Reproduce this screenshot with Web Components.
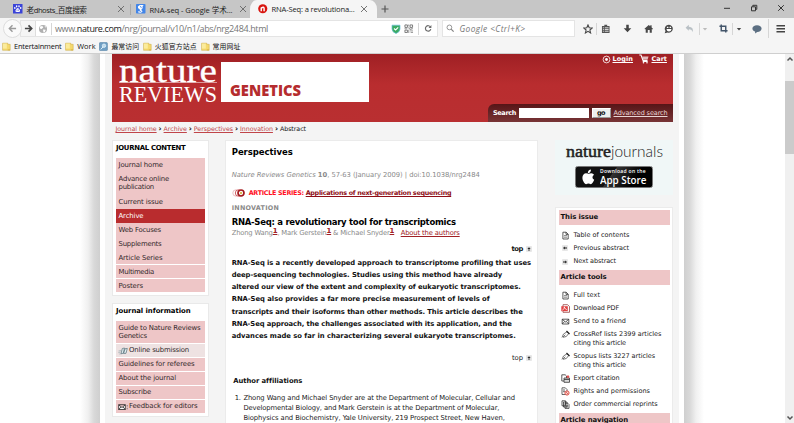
<!DOCTYPE html>
<html lang="en">
<head>
<meta charset="utf-8">
<title>RNA-Seq: a revolutionary tool for transcriptomics</title>
<style>
html,body{margin:0;height:100%;overflow:hidden;background:#fff}
</style>
</head>
<body>
<browser-window></browser-window>
<script>
const ICONS = {
  paw:['0 0 10 10','<rect width="10" height="10" fill="#3a43d8"/><path d="M5 4.3Q6.3 4.6 7.5 7 7.6 8.7 5 8.4 2.3 8.7 2.5 7 3.6 4.5 5 4.3Z" fill="#fff"/><ellipse cx="1.9" cy="4.2" rx=".8" ry="1.1" fill="#fff"/><ellipse cx="3.8" cy="2.4" rx=".8" ry="1.2" fill="#fff"/><ellipse cx="6.3" cy="2.4" rx=".8" ry="1.2" fill="#fff"/><ellipse cx="8.1" cy="4.2" rx=".8" ry="1.1" fill="#fff"/><path d="M4.3 5.8v1.6M5.8 5.8v1.4" stroke="#3a43d8" stroke-width=".6"/>'],
  scholar:['0 0 10 10','<rect width="10" height="10" rx=".8" fill="#4285e8"/><path d="M2 2.5 4 1h4.2L7 2.2v2.2L5.8 5.5v1L7 7.6 5.3 9.3H3L2 8.2 4.4 6.8 3.6 5.3 2.2 4.6Z" fill="#fff"/><path d="M4.2 2.3q1.7.3 1.3 2M3.5 8.2l2-.6" stroke="#4285e8" stroke-width=".8" fill="none"/>'],
  nrg:['0 0 10 10','<circle cx="5" cy="5" r="4.8" fill="#d8150f"/><path d="M3.4 7.5V3.7M3.4 4.4Q6.3 2.3 6.4 4.8V7.5" fill="none" stroke="#fff" stroke-width="1.5"/>'],
  x:['0 0 8 8','<path d="M1 1l6 6M7 1 1 7" stroke="#666" stroke-width=".9"/>'],
  wx:['0 0 8 8','<path d="M1.2 1.2l5.6 5.6M6.8 1.2 1.2 6.8" stroke="#333" stroke-width="1"/>'],
  min:['0 0 8 8','<path d="M1 4.3h6" stroke="#333" stroke-width="1"/>'],
  max:['0 0 8 8','<path d="M1.5 2.8h4v4h-4zM2.8 2.6V1.3h4v4H5.6" fill="none" stroke="#333"/>'],
  plus:['0 0 8 8','<path d="M.5 4h7M4 .5v7" stroke="#555" stroke-width="1.2"/>'],
  back:['0 0 10 10','<path d="M9 5H2M5 1.5 1.5 5 5 8.5" fill="none" stroke="#9b9b9b" stroke-width="1.6"/>'],
  fwd:['0 0 10 10','<path d="M1 5h7M5 1.5 8.5 5 5 8.5" fill="none" stroke="#444" stroke-width="1.9"/>'],
  globe:['0 0 10 10','<circle cx="5" cy="5" r="4" fill="#b0b0b0"/><path d="M2 2.5 4.3 2l1 1.5L3.5 5 2 4.5ZM5 5.5l2.7.2-.8 2.2L5.5 8.5ZM6.5 1.7l1.6 1-.6 1z" fill="#fff"/>'],
  shield:['0 0 10 10','<path d="M1 1.2h8V5Q8.8 8 5 9.6 1.2 8 1 5Z" fill="#3aab62" stroke="#6cbfd8" stroke-width=".7"/><path d="M3 4.5 4.6 6 7.2 3.3" fill="none" stroke="#fff" stroke-width="1.1"/>'],
  qr:['0 0 10 10','<path d="M1 1h2.6v2.6H1zM6.4 1H9v2.6H6.4zM1 6.4h2.6V9H1z" fill="none" stroke="#777"/><path d="M5 .5v2M4.5 4h1v1h1v1h1V5h2M.5 5h3M5 6v3.5M6.5 7.3h3M7 9h2.5" fill="none" stroke="#888" stroke-width=".9"/>'],
  reload:['0 0 10 10','<path d="M7.6 3.5A3.2 3.2 0 1 0 8 6" fill="none" stroke="#6b6b6b" stroke-width="1.4"/><path d="M8.7 1.2V4.6H5.3Z" fill="#6b6b6b"/>'],
  lens:['0 0 10 10','<circle cx="4" cy="4" r="2.8" fill="none" stroke="#858585"/><path d="M6 6l3 3" stroke="#858585" stroke-width="1.4"/>'],
  star:['0 0 10 10','<path d="M5 .9 6.2 3.7l3 .3L6.9 6 7.6 9 5 7.4 2.4 9 3.1 6 .8 4l3-.3Z" fill="none" stroke="#484848" stroke-width="1.1"/>'],
  clip:['0 0 10 10','<path d="M1 2h2.5V.8h3V2H9v7.4H1z" fill="#555"/><path d="M2 4h1M4 4h4M2 5.8h1M4 5.8h4M2 7.6h1M4 7.6h4" stroke="#fff" stroke-width=".8"/>'],
  down:['0 0 10 10','<path d="M3.6.8h2.8v4h2.8L5 9.3.8 4.8h2.8z" fill="#444"/>'],
  home:['0 0 10 10','<path d="M.5 5 5 1l1.6 1.4V1.2H8v2.5L9.5 5l-.7.7-.6-.5v4H6V6.3H4v2.9H1.8v-4l-.6.5z" fill="#484848"/>'],
  smile:['0 0 10 10','<path d="M5 .7a4.3 4 0 1 1-1.3 7.9L.7 9.2 1.5 7A4.2 4 0 0 1 5 .7Z" fill="#484848"/><path d="M2.4 5h5.2Q7 7.5 5 7.5 3 7.5 2.4 5ZM2.9 2.8h1.5v1.2H2.9zM5.6 2.8h1.5v1.2H5.6z" fill="#fff"/>'],
  undo:['0 0 10 10','<path d="M.6 4 4 .9v2Q9.5 3 8 8.8 7.5 5.5 4 5.4v1.8Z" fill="#b9c0c5"/>'],
  caret:['0 0 6 6','<path d="M.8 2h4.4L3 4.6z" fill="currentColor"/>'],
  crop:['0 0 10 10','<path d="M2.5.5v7h7M.5 2.5h7v7" fill="none" stroke="#43556a" stroke-width="1.6"/>'],
  bubble:['0 0 10 10','<path d="M5 1.2c2.7 0 4.6 1.5 4.6 3.4S7.8 8 5.3 8L3 9.6l.2-1.9C1.5 7.2.4 6 .4 4.6.4 2.7 2.3 1.2 5 1.2Z" fill="#5c6f82"/>'],
  menu:['0 0 10 10','<path d="M.5 1.8h9M.5 5h9M.5 8.2h9" stroke="#444" stroke-width="1.5"/>'],
  folder:['0 0 9 9','<path d="M.6 1.2h5.2v1.1h2.4v6H.6z" fill="#f5d96d" stroke="#c9a843" stroke-width=".5"/><path d="M1 1.6h3.8v5H1z" fill="#fbeb9c"/><path d="M5.8 7.9h2.2" stroke="#d2a93c" stroke-width=".8"/>'],
  smart:['0 0 9 9','<rect x=".4" y=".6" width="8" height="8" rx=".8" fill="#6f9fc4" stroke="#517fa5" stroke-width=".6"/><circle cx="5" cy="3.7" r="1.7" fill="#b9d9ec" stroke="#e6f4fc" stroke-width=".8"/><path d="M3.9 5 1.8 7.4" stroke="#e6f4fc"/>'],
  login:['0 0 9 9','<circle cx="4.5" cy="4.5" r="3.4" fill="none" stroke="#fff" stroke-width=".8"/><circle cx="4.5" cy="4.5" r="1.4" fill="#fff"/>'],
  cart:['0 0 10 10','<path d="M.3 1h1.7l2 5.4h4.5M3.7 7.5h5" fill="none" stroke="#fff" stroke-width="1.1"/><path d="M3 2.5h6.5L8.6 5.4H4Z" fill="#fff" opacity=".7"/><circle cx="4.5" cy="8.8" r=".8" fill="#fff"/><circle cx="8" cy="8.8" r=".8" fill="#fff"/>'],
  series:['0 0 13 8','<circle cx="4" cy="4" r="3.2" fill="#fff" stroke="#e4a5a7" stroke-width=".7"/><circle cx="6.5" cy="4" r="3.2" fill="#fff" stroke="#c94d51" stroke-width=".9"/><circle cx="9" cy="4" r="3" fill="#fff" stroke="#a3181c" stroke-width="1.7"/><circle cx="9" cy="4" r="1.2" fill="#d5bb55"/>'],
  up:['0 0 6 6','<rect x=".2" y=".2" width="5.6" height="5.6" fill="#e2e2e2"/><path d="M3 1.2 4.6 3H1.4zM2.6 3h.8v2h-.8z" fill="#222"/>'],
  left:['0 0 6 6','<rect x=".2" y=".2" width="5.6" height="5.6" fill="#e2e2e2"/><path d="M1 3 2.8 1.4v3.2zM2.8 2.6H5v.8H2.8z" fill="#222"/>'],
  right:['0 0 6 6','<rect x=".2" y=".2" width="5.6" height="5.6" fill="#e2e2e2"/><path d="M5 3 3.2 1.4v3.2zM1 2.6h2.2v.8H1z" fill="#222"/>'],
  doc:['0 0 9 9','<path d="M1.9 1.2h3.2L7.2 3.2V8H1.9zM5 1.2v2.2h2.2" fill="#fff" stroke="#333" stroke-width=".8"/><path d="M3 4.6h3M3 6.2h3" stroke="#555" stroke-width=".7"/>'],
  pdf:['0 0 9 9','<path d="M2 .7h4.6L8.5 2.6V8.3H2z" fill="#fff" stroke="#8a2a28" stroke-width=".7"/><path d="M.3 2.2h6.5v5H.3z" fill="#e04444"/><path d="M1.3 6.2Q4.5 4 3.3 2.8 2.3 3.7 5.8 5.7" fill="none" stroke="#fff" stroke-width=".8"/>'],
  mail:['0 0 9 9','<path d="M1.2 2.2h6.6v4.8H1.2zM1.2 2.3 4.5 5 7.8 2.3M1.2 7l2.5-2.5M7.8 7 5.3 4.5" fill="#fff" stroke="#333" stroke-width=".8"/>'],
  pen:['0 0 9 9','<path d="M1 7.5 2.5 4 6 1.8 7.7 3.5 5.3 6.5 2 7.3M2 7l2.3-2.3" fill="#fff" stroke="#555" stroke-width=".8"/><path d="M5.5 1 8.5 4" stroke="#222" stroke-width="1.3"/>'],
  exp:['0 0 9 9','<path d="M.8.8h3.4L5.5 2V7H.8z" fill="#fff" stroke="#333" stroke-width=".8"/><path d="M3 4h5.5v4.3H3zM3 5.5h5.5" fill="#ddd" stroke="#333" stroke-width=".8"/><path d="M5.5 2.8h2.8M7 1.2v3" stroke="#d33" stroke-width="1"/>'],
  rights:['0 0 9 9','<path d="M1 .8h3.3L6 2.5V7.5H1zM2 3h2M2 4.7h2" fill="#fff" stroke="#444" stroke-width=".8"/><circle cx="6" cy="6" r="2.1" fill="#fbd8d4" stroke="#dc5048"/><path d="M4.7 4.7l2.6 2.6" stroke="#dc5048" stroke-width=".8"/>'],
  copies:['0 0 9 9','<path d="M1 .8h3.5v5H1zM2.5 2h3.5v5H2.5zM4 3.2h2.7L8 4.5V8.4H4z" fill="#fff" stroke="#333" stroke-width=".8"/><path d="M5 5.7h2M5 7h2" stroke="#333" stroke-width=".6"/>'],
  submit:['0 0 10 8','<path d="M3 6.8 4.3 1.5 6.5 1 5.3 6.2zM5.6 6.5 7 1.8 9.3 1.4 8 6.3z" fill="#e3eef0" stroke="#55707a" stroke-width=".7"/><path d="M.3 5.7 2.6 5M.5 4l2.8-.5M1.3 7 3 6.8" stroke="#8ba2aa" stroke-width=".6"/>'],
  feedback:['0 0 10 8','<path d="M.7 1.7h6.6v4.8H.7zM.7 1.8 4 4.5 7.3 1.8M.7 6.5 3 4M7.3 6.5 5 4" fill="#fff" stroke="#222" stroke-width=".8"/><path d="M9.2 2v1.5M9.2 4.8v1.5" stroke="#666" stroke-width=".8"/>'],
  apple:['0 0 24 28','<path d="M16.5.5q.3 2.9-1.6 5-1.9 2-4.1 1.9-.3-2.8 1.6-4.8Q14.2.7 16.5.5ZM22.5 19.7q-1 3-2.9 5.5-1.7 2.5-3.4 2.5-1 0-2.2-.7-2.2-.9-4.4.1-1.2.6-2 .6-2 0-4-3Q.7 20.7.7 16.2q0-4 2.1-6.4Q4.8 7.5 7.5 7.5q1 0 2.8.7 1.5.6 2 .6.4 0 2.2-.7 1.7-.7 2.8-.7 3.2.2 4.9 2.7-2.9 1.8-2.9 4.9 0 3.3 3.2 4.7Z" fill="#fff"/>'],
  chevUp:['0 0 8 8','<path d="M1.5 5.5 4 3l2.5 2.5" fill="none" stroke="#555" stroke-width="1.5"/>'],
  chevDown:['0 0 8 8','<path d="M1.5 2.5 4 5l2.5-2.5" fill="none" stroke="#555" stroke-width="1.5"/>']
};
const make = (name, html) => customElements.define(name, class extends HTMLElement {
  connectedCallback(){
    if (this.shadowRoot) return;
    const root = this.attachShadow({mode:'open'});
    const t = document.createElement('template');
    t.innerHTML = typeof html === 'function' ? html(this) : html;
    root.append(t.content.cloneNode(true));
  }
});
const a = (el,n,d='') => el.getAttribute(n) ?? d;

make('ui-icon', el => {
  const [vb, body] = ICONS[a(el,'name')];
  return `<style>:host{display:block;flex:none;width:${a(el,'w','10')}px;height:${a(el,'h',a(el,'w','10'))}px}svg{display:block;width:100%;height:100%}</style><svg viewBox="${vb}">${body}</svg>`;
});

make('v-sep', `<style>:host{display:block;flex:none;width:1px;height:12px;background:#d6d6d6}</style>`);

make('browser-tab', el => `<style>
:host{display:flex;align-items:center;box-sizing:border-box;height:18px;flex:none;font-size:7.6px;color:#222}
:host([active]){background:#f5f5f5;border-radius:7px 7px 0 0/9px 9px 0 0}
fit-text{margin-left:4px}.c{margin-left:auto}
</style><ui-icon name="${a(el,'icon')}" w="9.5"></ui-icon><fit-text w="${a(el,'w')}"><slot></slot></fit-text><ui-icon class="c" name="x" w="8"></ui-icon>`);

make('tab-strip', `<style>
:host{display:flex;height:18px;background:#c6c6c6;align-items:center}
v-sep{background:#aaa;height:11px}
.ctl{display:flex;margin-left:auto;gap:19px;padding-right:9px;margin-top:-2px}
</style>
<browser-tab icon="paw" w="60" style="width:112px;margin-left:13px">老dhosts_百度搜索</browser-tab><v-sep style="margin-left:5px"></v-sep>
<browser-tab icon="scholar" w="83" style="width:111px;margin-left:5px">RNA-seq - Google 学术...</browser-tab>
<browser-tab active icon="nrg" w="83" style="width:127px;margin-left:3px;padding:0 9px 0 8px">RNA-Seq: a revolutiona...</browser-tab>
<ui-icon name="plus" w="8" style="margin-left:4px"></ui-icon>
<div class="ctl"><ui-icon name="min" w="8"></ui-icon><ui-icon name="max" w="8"></ui-icon><ui-icon name="wx" w="8"></ui-icon></div>`);

make('nav-bar', `<style>
:host{display:flex;align-items:center;height:21px;background:#f5f5f5;color:#777}
.back{display:grid;place-items:center;box-sizing:border-box;width:19px;height:19px;border:1px solid #ddd;border-radius:50%;background:#fafafa;margin-left:3px;flex:none;z-index:1}
.url,.find{display:flex;align-items:center;box-sizing:border-box;height:16.5px;background:#fff;border:1px solid #e4e4e4}
.url{width:418px;margin-left:-2px}.fwd{display:grid;place-items:center;width:15px;height:100%;background:#f5f5f5;border-right:1px solid #ddd;padding-left:1px;box-sizing:border-box}
.url fit-text{font-size:9px}.url b{font-weight:400;color:#222}
.find{width:133px;margin-left:4px}.find fit-text{font-size:8.4px;font-style:italic;margin-left:5px}
</style>
<div class="back"><ui-icon name="back" w="9"></ui-icon></div>
<div class="url"><div class="fwd"><ui-icon name="fwd" w="9"></ui-icon></div><ui-icon name="globe" w="10" style="margin-left:2px"></ui-icon><v-sep style="margin-left:3px"></v-sep><fit-text w="213" style="margin-left:3px">www.<b>nature.com</b>/nrg/journal/v10/n1/abs/nrg2484.html</fit-text>
<ui-icon name="shield" style="margin-left:auto"></ui-icon><ui-icon name="qr" w="9.5" style="margin-left:3px"></ui-icon><v-sep style="margin-left:4px"></v-sep><ui-icon name="reload" w="8.5" style="margin:0 5px 0 5px"></ui-icon></div>
<div class="find"><ui-icon name="lens" w="8.5" style="margin-left:3px"></ui-icon><fit-text w="66">Google &lt;Ctrl+K&gt;</fit-text></div>
<ui-icon name="star" style="margin-left:8px"></ui-icon><v-sep style="margin-left:3px"></v-sep><ui-icon name="clip" w="9.5" style="margin-left:4px"></ui-icon>
<ui-icon name="down" w="9" style="margin-left:12px"></ui-icon><ui-icon name="home" w="9.5" style="margin-left:12px"></ui-icon><ui-icon name="smile" style="margin-left:11px"></ui-icon>
<ui-icon name="undo" w="9.5" style="margin-left:11px"></ui-icon><v-sep style="margin-left:4px"></v-sep><ui-icon name="caret" w="6" style="margin-left:2px;color:#bbb"></ui-icon>
<ui-icon name="crop" w="9" style="margin-left:11px"></ui-icon><v-sep style="margin-left:4px"></v-sep><ui-icon name="caret" w="6" style="margin-left:3px;color:#444"></ui-icon>
<ui-icon name="bubble" style="margin-left:10px"></ui-icon><v-sep style="margin-left:6px;height:19px"></v-sep><ui-icon name="menu" w="9.5" style="margin-left:7px"></ui-icon>`);

make('book-mark', el => `<style>:host{display:flex;align-items:center;flex:none;gap:3px}:host([cjk]){font:6.9px "Noto Sans CJK SC",sans-serif}fit-text{line-height:12px}</style><ui-icon name="${a(el,'icon','folder')}" w="9"></ui-icon><fit-text w="${a(el,'w')}"><slot></slot></fit-text>`);
make('bookmark-bar', `<style>:host{display:flex;box-sizing:border-box;align-items:center;height:15px;background:#f5f5f5;border-bottom:1px solid #cfcfcf;padding-left:2px;gap:3.7px;font-size:7.4px;color:#111}</style>
<book-mark w="47.5">Entertainment</book-mark><book-mark w="18.5">Work</book-mark><book-mark cjk icon="smart" w="27.8">最常访问</book-mark><book-mark cjk w="42">火狐官方站点</book-mark><book-mark cjk w="27.8">常用网址</book-mark>`);

make('site-header', `<style>
:host{display:flex;justify-content:space-between;height:67.5px;overflow:hidden;background:linear-gradient(#9f2024,#b92d2f 45%,#b92f31);color:#fff}
.brand{display:flex;padding-left:7.5px}
.mast{width:98px;font-family:"Liberation Serif",serif;white-space:nowrap;height:52px;margin-right:4px}
.n{height:28.5px;line-height:33px;font-size:34px;border-bottom:1px solid #dc9a9b;box-sizing:border-box;-webkit-text-stroke:.3px #fff}
.r{height:20px;line-height:23px;font-size:23.5px}
.box{box-sizing:border-box;width:148px;height:40px;margin-top:8px;background:#fff;padding:18.2px 0 0 8.5px;color:#b52c2e;font:800 15.8px/20px "Open Sans",sans-serif}
.side{display:flex;flex-direction:column;justify-content:space-between;width:185.5px;font-size:6.5px}
.acct{display:flex;justify-content:flex-end;align-items:center;padding-right:6px;height:10px;font-weight:700;text-decoration:underline}
.find{display:flex;align-items:center;box-sizing:border-box;height:17.5px;padding-left:5.5px;border-radius:6px 0 0 0;background:linear-gradient(#571517,#783436);font-weight:700}
.in{width:70px;height:10.5px;background:#fff;margin:0 3px 0 2.5px}
.go{box-sizing:border-box;width:19px;height:10.5px;background:#eee;border:1px solid #fff;border-right-color:#999;border-bottom-color:#999;color:#111;text-align:center;line-height:8px}
u{color:#e8d6d6}
</style>
<div class="brand"><div class="mast"><div class="n"><fit-text stretch w="98">nature</fit-text></div><div class="r"><fit-text stretch w="98">REVIEWS</fit-text></div></div><div class="box"><fit-text stretch w="71">GENETICS</fit-text></div></div>
<div class="side"><div class="acct"><ui-icon name="login" w="9"></ui-icon><fit-text w="20.5" style="margin-left:2px">Login</fit-text><ui-icon name="cart" w="10" style="margin-left:6px"></ui-icon><fit-text w="15.5" style="margin-left:2.5px">Cart</fit-text></div>
<div class="find"><fit-text w="23">Search</fit-text><div class="in"></div><div class="go"><fit-text w="8">go</fit-text></div><fit-text w="54" style="margin-left:3px;font-weight:400"><u>Advanced search</u></fit-text></div></div>`);

make('side-panel', `<style>:host{display:block;box-sizing:border-box;width:97px;border:1px solid #e9e9e9;background:#fff;padding:0 3px 2px 3.5px;margin-bottom:6.6px}
.h{height:17.4px;line-height:15px;font-size:6.9px;font-weight:700;color:#000}</style><div class="h"><slot name="title"></slot></div><slot></slot>`);
make('side-item', `<style>:host{display:flex;align-items:center;box-sizing:border-box;height:13.2px;margin-bottom:.8px;padding-left:2.5px;background:#eec6c7;color:#33292b;font-size:6.9px;line-height:8.7px}
:host([tall]){height:22.2px}:host([on]){background:#b92c2e;color:#fff}:host([pale]){background:#eee2e2}:host([mark]){padding-left:2px}</style><slot></slot>`);

make('text-row', el => `<style>:host{display:flex;align-items:center;height:${a(el,'h','10')}px;margin-top:${a(el,'gap','0')}px}:host([end]){justify-content:flex-end;gap:2.5px;padding-right:5px}</style><slot></slot>`);

make('article-body', `<style>
:host{display:block;box-sizing:border-box;width:312.5px;height:300px;background:#fff;border:1px solid #ebebeb;padding-left:5.7px;font-size:6.8px;color:#8a8a8a}
.t{font-size:8.5px;font-weight:700;color:#000}.s{font-weight:700;color:#ff1024}.s u{color:#8f0e16}.l{color:#a02025}
.abs{font-weight:700;color:#111}sup{font-size:7px;line-height:0;vertical-align:2px;color:#a02025;text-decoration:underline;font-weight:700}
.k{color:#222}
</style>
<text-row gap="5.8"><fit-text class="t" w="61">Perspectives</fit-text></text-row>
<text-row gap="13.2"><fit-text w="248"><i>Nature Reviews Genetics</i> <b>10</b>, 57-63 (January 2009) | doi:10.1038/nrg2484</fit-text></text-row>
<text-row gap="8"><ui-icon name="series" w="13" h="8"></ui-icon><fit-text class="s" w="202.5" style="margin-left:4px;font-size:6.4px">ARTICLE SERIES: <u>Applications of next-generation sequencing</u></fit-text></text-row>
<text-row gap="5.5"><fit-text w="47.5" style="font-weight:700;font-size:6.4px">INNOVATION</fit-text></text-row>
<text-row gap="3.5"><fit-text class="t" w="224">RNA-Seq: a revolutionary tool for transcriptomics</fit-text></text-row>
<text-row gap="1"><fit-text w="162.5">Zhong Wang<sup>1</sup>, Mark Gerstein<sup>1</sup> &amp; Michael Snyder<sup>1</sup></fit-text><fit-text class="l" w="59" style="margin-left:6.5px"><u>About the authors</u></fit-text></text-row>
<text-row end gap="6.5" class="abs"><fit-text w="11.5">top</fit-text><ui-icon name="up" w="6"></ui-icon></text-row>
<div class="abs" style="padding-top:1.9px">
<text-row h="12.25"><fit-text w="299">RNA-Seq is a recently developed approach to transcriptome profiling that uses</fit-text></text-row>
<text-row h="12.25"><fit-text w="270.5">deep-sequencing technologies. Studies using this method have already</fit-text></text-row>
<text-row h="12.25"><fit-text w="289">altered our view of the extent and complexity of eukaryotic transcriptomes.</fit-text></text-row>
<text-row h="12.25"><fit-text w="258">RNA-Seq also provides a far more precise measurement of levels of</fit-text></text-row>
<text-row h="12.25"><fit-text w="291">transcripts and their isoforms than other methods. This article describes the</fit-text></text-row>
<text-row h="12.25"><fit-text w="280">RNA-Seq approach, the challenges associated with its application, and the</fit-text></text-row>
<text-row h="12.25"><fit-text w="284">advances made so far in characterizing several eukaryote transcriptomes.</fit-text></text-row></div>
<text-row end gap="10.4" class="k"><fit-text w="11">top</fit-text><ui-icon name="up" w="6"></ui-icon></text-row>
<text-row gap="13"><fit-text w="68.5" style="margin-left:1.5px;color:#111;font-weight:700">Author affiliations</fit-text></text-row>
<div class="k" style="padding:8.1px 0 0 3px">
<text-row h="9.6"><fit-text w="6">1.</fit-text><fit-text w="271.5" style="margin-left:2.7px">Zhong Wang and Michael Snyder are at the Department of Molecular, Cellular and</fit-text></text-row>
<text-row h="9.6"><fit-text w="256" style="margin-left:8.7px">Developmental Biology, and Mark Gerstein is at the Department of Molecular,</fit-text></text-row>
<text-row h="9.6"><fit-text w="261.5" style="margin-left:8.7px">Biophysics and Biochemistry, Yale University, 219 Prospect Street, New Haven,</fit-text></text-row></div>`);

make('app-promo', `<style>:host{display:flex;flex-direction:column;align-items:center;width:118px;height:55px;background:#f0f7f7;margin-bottom:12px;color:#222}
.n{display:flex;align-items:baseline;margin-top:.5px;height:25px;line-height:20px;padding-left:1px}
.b{display:flex;align-items:center;box-sizing:border-box;width:78px;height:22.5px;border:1px solid #777;border-radius:2.5px;background:linear-gradient(125deg,#111 45%,#333 46%,#000 75%);color:#fff;padding-left:6px;font-family:"Open Sans",sans-serif}
.t{display:flex;flex-direction:column;margin-left:5px}</style>
<div class="n"><fit-text stretch w="45" style="font-family:'Liberation Serif',serif;font-size:17px;-webkit-text-stroke:.5px #222">nature</fit-text><fit-text stretch w="52" style="font-family:Lato,sans-serif;font-weight:300;font-size:16px">journals</fit-text></div>
<div class="b"><ui-icon name="apple" w="13" h="15.5"></ui-icon><div class="t"><fit-text w="46" style="font-size:5px;line-height:6px;font-weight:600">Download on the</fit-text><fit-text stretch w="46.5" style="font-size:10px;line-height:12px;font-weight:600">App Store</fit-text></div></div>`);

make('tool-head', `<style>:host{display:flex;align-items:center;height:14.5px;background:#eec6c7;color:#111;font-weight:700;font-size:6.9px;padding-left:1.5px}</style><slot></slot>`);
make('tool-row', el => `<style>:host{display:flex;height:13.1px;align-items:center;color:#222;font-size:6.5px}:host([tall]){height:21.8px}
.i{display:grid;place-items:center;width:12px;height:13px;margin-right:2.5px;align-self:flex-start}.t{line-height:8.7px;display:flex;flex-direction:column}</style><div class="i"><ui-icon name="${a(el,'icon')}" w="${a(el,'w','9')}"></ui-icon></div><div class="t"><slot></slot></div>`);
make('tool-panel', `<style>:host{display:block;box-sizing:border-box;width:118px;height:240px;background:#fff;border:1px solid #ebebeb;padding:2.2px 2.5px 0 3px}.g{padding:4.2px 0 2px}</style>
<tool-head><fit-text w="37.5">This issue</fit-text></tool-head>
<div class="g"><tool-row icon="doc"><fit-text w="56">Table of contents</fit-text></tool-row><tool-row icon="left" w="6"><fit-text w="55.5">Previous abstract</fit-text></tool-row><tool-row icon="right" w="6"><fit-text w="42.5">Next abstract</fit-text></tool-row></div>
<tool-head><fit-text w="46">Article tools</fit-text></tool-head>
<div class="g"><tool-row icon="doc"><fit-text w="26.5">Full text</fit-text></tool-row><tool-row icon="pdf"><fit-text w="45.5">Download PDF</fit-text></tool-row><tool-row icon="mail"><fit-text w="52.5">Send to a friend</fit-text></tool-row>
<tool-row tall icon="pen"><fit-text w="88">CrossRef lists 2399 articles</fit-text><fit-text w="52.5">citing this article</fit-text></tool-row>
<tool-row tall icon="pen"><fit-text w="81.5">Scopus lists 3227 articles</fit-text><fit-text w="52.5">citing this article</fit-text></tool-row>
<tool-row icon="exp"><fit-text w="46">Export citation</fit-text></tool-row><tool-row icon="rights"><fit-text w="76.5">Rights and permissions</fit-text></tool-row><tool-row icon="copies"><fit-text w="84">Order commercial reprints</fit-text></tool-row></div>
<tool-head><fit-text w="67.5">Article navigation</fit-text></tool-head>`);

make('scroll-bar', `<style>:host{display:flex;flex-direction:column;width:9px;background:#f0f0f0;align-items:center;flex:none}.th{width:8.5px;height:73px;background:#cbcbcb;margin:18px 0 auto}</style>
<ui-icon name="chevUp" w="8" style="margin-top:1px"></ui-icon><div class="th"></div><ui-icon name="chevDown" w="8" style="margin-bottom:1px"></ui-icon>`);

make('web-page', `<style>
:host{display:flex;flex:1;min-height:0;overflow:hidden;background:#fff;font-family:"DejaVu Sans",Verdana,sans-serif}
.l,.r{flex:none;width:20px}.l{margin-left:80px;background:linear-gradient(90deg,#fff,#f0f0f0 40%,#d9d9d9 70%,#cfcfcf)}.r{background:linear-gradient(270deg,#fff,#f0f0f0 40%,#d9d9d9 70%,#cfcfcf);margin-right:auto}
.page{box-sizing:border-box;width:584px;border:solid #fff;border-width:0 5px;background:#f4f4f4;padding:0 6px 0 6.5px;flex:none}
.crumb{height:18.5px;display:flex;padding:2.5px 0 0 4px;line-height:10px;font-size:6.3px;color:#111;box-sizing:border-box}.crumb u{color:#c0454a}.crumb b{font-size:7.5px}
.cols{display:flex;justify-content:space-between}.cols>div:first-child{margin-right:16.5px}.cols>div:last-child{margin-left:auto}
</style>
<div class="l"></div><div class="page"><site-header></site-header>
<div class="crumb"><fit-text w="190.5"><u>Journal home</u> <b>›</b> <u>Archive</u> <b>›</b> <u>Perspectives</u> <b>›</b> <u>Innovation</u> <b>›</b> Abstract</fit-text></div>
<div class="cols"><div>
<side-panel><fit-text slot="title" w="69.5">JOURNAL CONTENT</fit-text>
<side-item><fit-text w="44.5">Journal home</fit-text></side-item><side-item tall><div><fit-text w="50.5">Advance online</fit-text><br><fit-text w="35.5">publication</fit-text></div></side-item><side-item><fit-text w="44.5">Current issue</fit-text></side-item><side-item on><fit-text w="25">Archive</fit-text></side-item><side-item><fit-text w="42.5">Web Focuses</fit-text></side-item><side-item><fit-text w="43">Supplements</fit-text></side-item><side-item><fit-text w="44">Article Series</fit-text></side-item><side-item><fit-text w="35.5">Multimedia</fit-text></side-item><side-item><fit-text w="24.5">Posters</fit-text></side-item></side-panel>
<side-panel><fit-text slot="title" w="74.5">Journal information</fit-text>
<side-item tall><div><fit-text w="82">Guide to Nature Reviews</fit-text><br><fit-text w="28.5">Genetics</fit-text></div></side-item><side-item pale mark><ui-icon name="submit" w="10" h="8"></ui-icon><fit-text w="60" style="margin-left:1px">Online submission</fit-text></side-item><side-item><fit-text w="76">Guidelines for referees</fit-text></side-item><side-item><fit-text w="57.5">About the journal</fit-text></side-item><side-item><fit-text w="32.5">Subscribe</fit-text></side-item><side-item mark><ui-icon name="feedback" w="10" h="8"></ui-icon><fit-text w="68.5" style="margin-left:1px">Feedback for editors</fit-text></side-item></side-panel>
</div><article-body></article-body><div><app-promo></app-promo><tool-panel></tool-panel></div></div></div>
<div class="r"></div><scroll-bar></scroll-bar>`);

make('browser-window', `<style>:host{display:flex;flex-direction:column;width:794px;height:423px;overflow:hidden;background:#f5f5f5;font-family:"Open Sans","Noto Sans CJK SC",sans-serif}</style>
<tab-strip></tab-strip><nav-bar></nav-bar><bookmark-bar></bookmark-bar><web-page></web-page>`);

/* A single line of text tracked, or with "stretch" scaled, to the width given in w. */
customElements.define('fit-text', class extends HTMLElement {
  connectedCallback(){
    if (this.shadowRoot) return;
    this.attachShadow({mode:'open'}).innerHTML = '<style>:host{display:inline-block;white-space:nowrap;flex:none}</style><slot></slot>';
    const w = +this.getAttribute('w');
    const slot = this.shadowRoot.querySelector('slot');
    this.style.width = 'max-content';
    const natural = this.getBoundingClientRect().width;
    const n = slot.assignedNodes({flatten:true}).map(x => x.textContent).join('').length;
    if (this.hasAttribute('stretch')) {
      this.style.transformOrigin = '0 50%';
      this.style.transform = `scaleX(${w / natural})`;
      this.style.marginRight = (w - natural) + 'px';
    } else {
      this.style.letterSpacing = (w - natural) / n + 'px';
      this.style.width = w + 'px';
    }
  }
});
</script>
</body>
</html>
